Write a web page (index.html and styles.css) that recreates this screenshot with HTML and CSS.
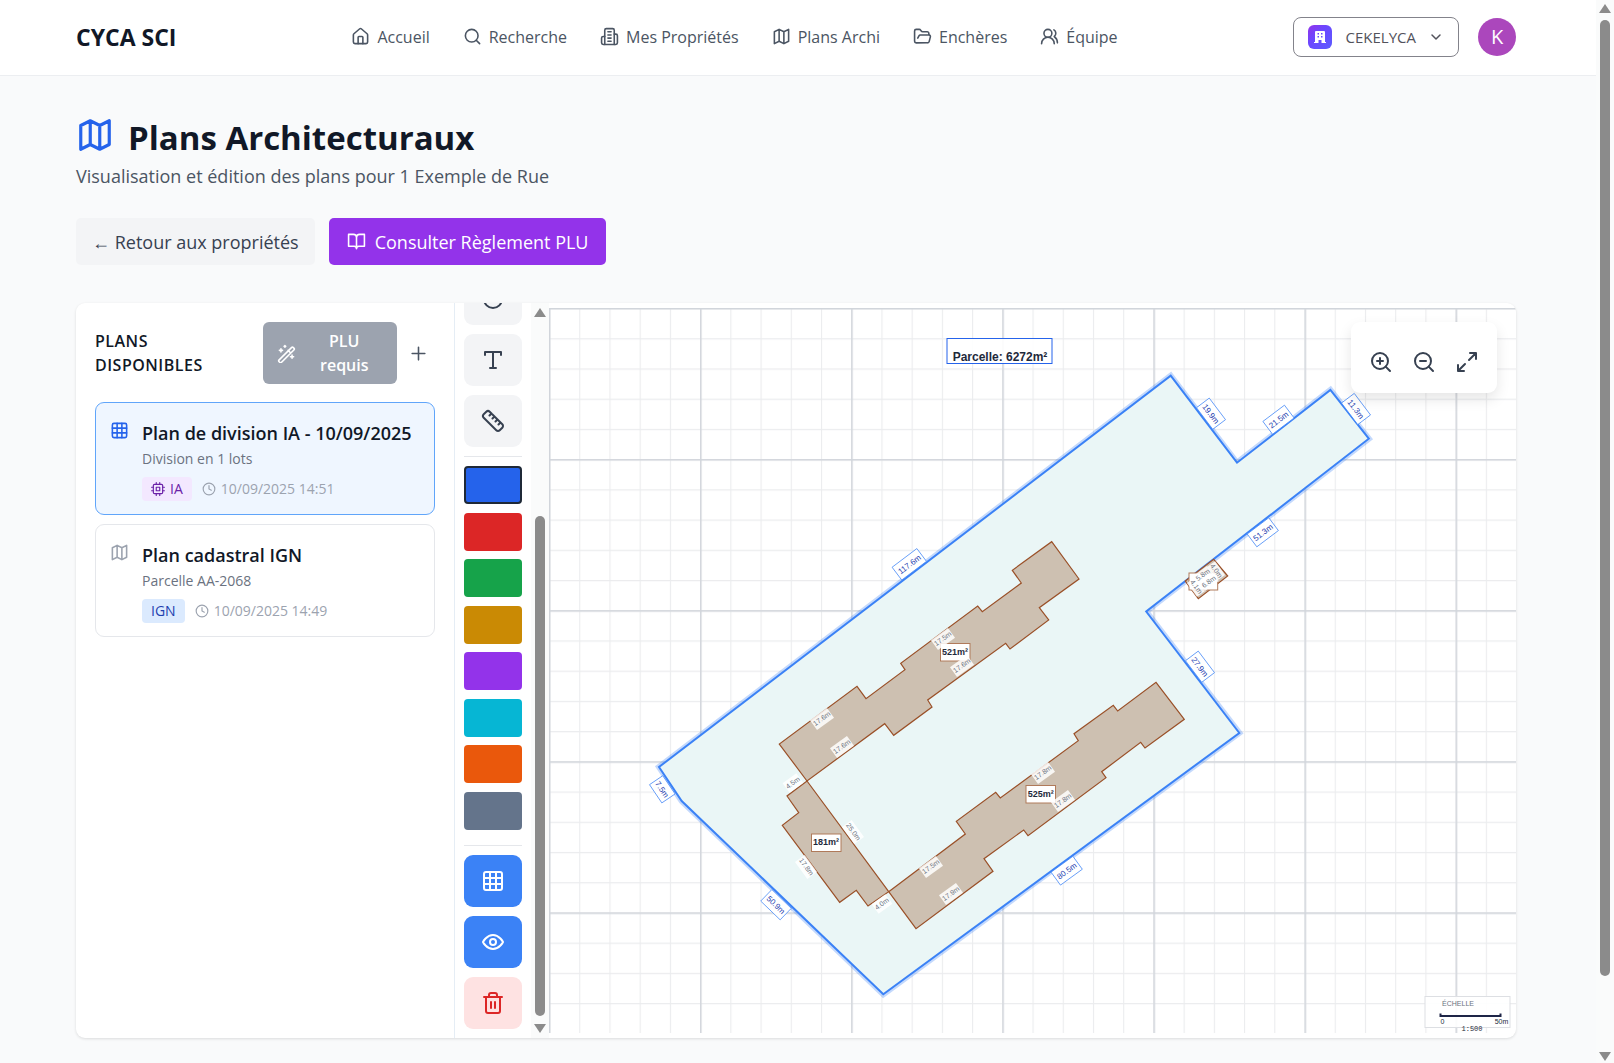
FILE: index.html
```html
<!DOCTYPE html>
<html lang="fr">
<head>
  <meta charset="UTF-8">
  <meta name="viewport" content="width=device-width, initial-scale=1.0">
  <title>CYCA SCI - Plans Architecturaux</title>
  <link rel="stylesheet" href="styles.css">
</head>
<body>
  <div class="page">
    <header class="header">
      <a class="brand" href="#">CYCA SCI</a>
      <nav class="nav">
        <a href="#"><svg class="icon" viewBox="0 0 24 24"><path d="M15 21v-8a1 1 0 0 0-1-1h-4a1 1 0 0 0-1 1v8"/><path d="M3 10a2 2 0 0 1 .7-1.5l7-6a2 2 0 0 1 2.6 0l7 6A2 2 0 0 1 21 10v9a2 2 0 0 1-2 2H5a2 2 0 0 1-2-2z"/></svg>Accueil</a>
        <a href="#"><svg class="icon" viewBox="0 0 24 24"><circle cx="11" cy="11" r="8"/><path d="m21 21-4.3-4.3"/></svg>Recherche</a>
        <a href="#"><svg class="icon" viewBox="0 0 24 24"><path d="M6 22V4a2 2 0 0 1 2-2h8a2 2 0 0 1 2 2v18Z"/><path d="M6 12H4a2 2 0 0 0-2 2v6a2 2 0 0 0 2 2h2"/><path d="M18 9h2a2 2 0 0 1 2 2v9a2 2 0 0 1-2 2h-2"/><path d="M10 6h4M10 10h4M10 14h4M10 18h4"/></svg>Mes Propriétés</a>
        <a href="#"><svg class="icon" viewBox="0 0 24 24"><path d="m3 6 6-3 6 3 6-3v15l-6 3-6-3-6 3zM9 3v15M15 6v15"/></svg>Plans Archi</a>
        <a href="#"><svg class="icon" viewBox="0 0 24 24"><path d="m6 14 1.500-2.900A2 2 0 0 1 9.240 10H20a2 2 0 0 1 1.940 2.500l-1.540 6a2 2 0 0 1-1.950 1.500H4a2 2 0 0 1-2-2V5a2 2 0 0 1 2-2h3.900a2 2 0 0 1 1.690.900l.810 1.200a2 2 0 0 0 1.670.900H18a2 2 0 0 1 2 2v2"/></svg>Enchères</a>
        <a href="#"><svg class="icon" viewBox="0 0 24 24"><path d="M18 21a8 8 0 0 0-16 0"/><circle cx="10" cy="8" r="5"/><path d="M22 20c0-3.370-2-6.500-4-8a5 5 0 0 0-.450-8.300"/></svg>Équipe</a>
      </nav>
      <div class="account">
        <button class="org" type="button">
          <span class="org-logo"><svg viewBox="0 0 16 16"><path fill="#fff" fill-rule="evenodd" d="M4 2h8a1 1 0 0 1 1 1v10h1v1H9.500v-3h-3v3H2v-1h1V3a1 1 0 0 1 1-1zm1.500 2v1.500H7V4zM9 4v1.500h1.500V4zM5.500 7v1.500H7V7zM9 7v1.500h1.500V7z"/></svg></span>
          CEKELYCA
          <svg class="icon chevron" viewBox="0 0 24 24"><path d="m4 8 8 8 8-8"/></svg>
        </button>
        <button class="avatar" type="button" aria-label="Mon compte">K</button>
      </div>
    </header>

    <main class="main">
      <h1><svg class="icon" viewBox="0 0 24 24"><path d="m3 6 6-3 6 3 6-3v15l-6 3-6-3-6 3zM9 3v15M15 6v15"/></svg>Plans Architecturaux</h1>
      <p class="subtitle">Visualisation et édition des plans pour 1 Exemple de Rue</p>
      <div class="actions">
        <a class="btn btn-back" href="#">← Retour aux propriétés</a>
        <button class="btn btn-plu" type="button"><svg class="icon" viewBox="0 0 24 24"><path d="M2 3h6a4 4 0 0 1 4 4v14a3 3 0 0 0-3-3H2zM22 3h-6a4 4 0 0 0-4 4v14a3 3 0 0 1 3-3h7z"/></svg>Consulter Règlement PLU</button>
      </div>

      <section class="workspace">
        <aside class="sidebar">
          <div class="sidebar-head">
            <h2>Plans disponibles</h2>
            <button class="btn-requis" type="button">
              <svg class="icon" viewBox="0 0 24 24"><path d="m21.600 5.600-1.300-1.300a1.200 1.200 0 0 0-1.700 0L2.400 20.400a1.200 1.200 0 0 0 0 1.700l1.300 1.300a1.200 1.200 0 0 0 1.700 0L21.600 7.300a1.200 1.200 0 0 0 0-1.700zM14 8l3 3M5 6v4M19 14v4M10 2v2M7 8H3M21 16h-4M11 3H9"/></svg>
              <span>PLU requis</span>
            </button>
            <button class="btn-add" type="button" aria-label="Ajouter"><svg class="icon" viewBox="0 0 24 24"><path d="M4 12h16M12 4v16"/></svg></button>
          </div>

          <article class="plan selected">
            <svg class="icon plan-icon" viewBox="0 0 24 24"><rect x="3" y="3" width="18" height="18" rx="2"/><path d="M3 9h18M3 15h18M9 3v18M15 3v18"/></svg>
            <div>
              <h3>Plan de division IA - 10/09/2025</h3>
              <p>Division en 1 lots</p>
              <div class="meta">
                <span class="tag tag-ia"><svg class="icon" viewBox="0 0 24 24"><rect x="4" y="4" width="16" height="16" rx="2"/><rect x="9" y="9" width="6" height="6"/><path d="M15 1v3M9 1v3M15 20v3M9 20v3M20 9h3M20 15h3M1 9h3M1 15h3"/></svg>IA</span>
                <span class="date"><svg class="icon" viewBox="0 0 24 24"><circle cx="12" cy="12" r="10"/><path d="M12 6v6l4 2"/></svg>10/09/2025 14:51</span>
              </div>
            </div>
          </article>

          <article class="plan">
            <svg class="icon plan-icon" viewBox="0 0 24 24"><path d="m3 6 6-3 6 3 6-3v15l-6 3-6-3-6 3zM9 3v15M15 6v15"/></svg>
            <div>
              <h3>Plan cadastral IGN</h3>
              <p>Parcelle AA-2068</p>
              <div class="meta">
                <span class="tag tag-ign">IGN</span>
                <span class="date"><svg class="icon" viewBox="0 0 24 24"><circle cx="12" cy="12" r="10"/><path d="M12 6v6l4 2"/></svg>10/09/2025 14:49</span>
              </div>
            </div>
          </article>
        </aside>

        <div class="toolbar">
          <div class="tools">
            <button class="tool" type="button" aria-label="Cercle"><svg class="icon" viewBox="0 0 24 24"><circle cx="12" cy="12" r="9"/></svg></button>
            <button class="tool" type="button" aria-label="Texte"><svg class="icon" viewBox="0 0 24 24"><path d="M4 7V4h16v3M9 20h6M12 4v16"/></svg></button>
            <button class="tool" type="button" aria-label="Mesure"><svg class="icon" viewBox="0 0 24 24"><path d="M21.300 15.300a2.400 2.400 0 0 1 0 3.400l-2.600 2.600a2.400 2.400 0 0 1-3.400 0L2.700 8.700a2.410 2.410 0 0 1 0-3.400l2.600-2.600a2.410 2.410 0 0 1 3.400 0zM14.500 12.500l2-2M11.500 9.500l2-2M8.500 6.500l2-2M17.500 15.500l2-2"/></svg></button>
            <hr>
            <div class="colors">
              <button class="color blue active" type="button" aria-label="Bleu"></button>
              <button class="color red" type="button" aria-label="Rouge"></button>
              <button class="color green" type="button" aria-label="Vert"></button>
              <button class="color yellow" type="button" aria-label="Jaune"></button>
              <button class="color purple" type="button" aria-label="Violet"></button>
              <button class="color cyan" type="button" aria-label="Cyan"></button>
              <button class="color orange" type="button" aria-label="Orange"></button>
              <button class="color gray" type="button" aria-label="Gris"></button>
            </div>
            <hr class="after-colors">
            <button class="tool on" type="button" aria-label="Grille"><svg class="icon" viewBox="0 0 24 24"><rect x="3" y="3" width="18" height="18" rx="2"/><path d="M3 9h18M3 15h18M9 3v18M15 3v18"/></svg></button>
            <button class="tool on" type="button" aria-label="Affichage"><svg class="icon" viewBox="0 0 24 24"><path d="M2 12s3.500-7 10-7 10 7 10 7-3.500 7-10 7-10-7-10-7z"/><circle cx="12" cy="12" r="3"/></svg></button>
            <button class="tool delete" type="button" aria-label="Effacer"><svg class="icon" viewBox="0 0 24 24"><path d="M3 6h18M19 6v14a2 2 0 0 1-2 2H7a2 2 0 0 1-2-2V6M8 6V4a2 2 0 0 1 2-2h4a2 2 0 0 1 2 2v2M10 11v6M14 11v6"/></svg></button>
          </div>
          <div class="scrollbar">
            <span class="arrow-up"></span>
            <span class="thumb thumb-tools"></span>
            <span class="arrow-down"></span>
          </div>
        </div>

        <div class="canvas">
          <svg class="drawing" viewBox="550 308 967 725">
            <defs>
              <pattern id="minor" x="550" y="308" width="30.22" height="30.22" patternUnits="userSpaceOnUse"><path d="M30.220 0H0V30.220" fill="none" stroke="#ebecee" stroke-width="2.200"/></pattern>
              <pattern id="major" x="550" y="308" width="151.1" height="151.1" patternUnits="userSpaceOnUse"><path d="M151.100 0H0V151.100" fill="none" stroke="#d1d5db" stroke-width="3"/></pattern>
            </defs>
            <rect x="550" y="308" width="967" height="725" fill="url(#minor)"/>
            <rect x="550" y="308" width="967" height="725" fill="url(#major)"/>

            <!-- parcelle -->
            <polygon class="halo" points="1171.7,375.7 1238,462.7 1331.4,390 1369.8,438.7 1147.2,611.5 1240.3,733 884.3,994.3 682.7,801 660,767"/>
            <polygon class="parcel" points="1171.7,375.7 1238,462.7 1331.4,390 1369.8,438.7 1147.2,611.5 1240.3,733 884.3,994.3 682.7,801 660,767"/>

            <!-- batiments -->
            <g class="building">
              <polygon points="1052.7,541.7 1080,579 1040.3,607.7 1049.7,620 1011,649 1006.7,643.3 928.7,700 933,707 894.7,735.3 885.7,723.7 808,781 780.3,744 858,686.3 867,698.7 906,669.7 901.7,663.3 978.7,606 983.3,611.7 1022.3,583 1013.3,570.3"/>
              <polygon points="808,781 889.7,891.7 869,906 857.3,890.3 840.7,902.3 783.3,825.3 799.7,812.7 788,796"/>
              <polygon points="889.7,891.7 966.3,834 957.3,821.3 996.7,792.3 1001.3,798 1079.3,740.7 1075,733.7 1114.3,705.3 1118.7,711 1157,682.3 1185.3,719.3 1146,748 1141.7,742.3 1102.7,771.7 1107,777.7 1029,835.7 1024.7,830 985,858.7 994,871.3 917,928.7"/>
              <polygon points="1186.3,581 1214.7,559.3 1228.7,576 1199.3,598.7"/>
            </g>

            <!-- surfaces -->
            <g class="area">
              <rect x="1190" y="573" width="28.700" height="17"/>
              <rect x="941.500" y="643.500" width="29.500" height="17.500"/><text x="956" y="655">521m²</text>
              <rect x="1027" y="785.500" width="29.500" height="17.500"/><text x="1041.700" y="797">525m²</text>
              <rect x="812.500" y="834" width="29.500" height="17.500"/><text x="827" y="845">181m²</text>
            </g>

            <!-- cotes batiments -->
            <g class="dim-small">
              <g transform="translate(944 639) rotate(-36)"><rect x="-10.500" y="-6" width="21" height="12"/><text y="2">17.5m</text></g>
              <g transform="translate(963 666) rotate(-36)"><rect x="-10.500" y="-6" width="21" height="12"/><text y="2">17.6m</text></g>
              <g transform="translate(823 719) rotate(-36)"><rect x="-10.500" y="-6" width="21" height="12"/><text y="2">17.6m</text></g>
              <g transform="translate(843 747) rotate(-36)"><rect x="-10.500" y="-6" width="21" height="12"/><text y="2">17.6m</text></g>
              <g transform="translate(794 783) rotate(-36)"><rect x="-8.500" y="-6" width="17" height="12"/><text y="2">4.5m</text></g>
              <g transform="translate(854 832) rotate(54)"><rect x="-10.500" y="-6" width="21" height="12"/><text y="2">25.0m</text></g>
              <g transform="translate(807 867) rotate(54)"><rect x="-10.500" y="-6" width="21" height="12"/><text y="2">17.8m</text></g>
              <g transform="translate(883 904) rotate(-36)"><rect x="-8.500" y="-6" width="17" height="12"/><text y="2">4.0m</text></g>
              <g transform="translate(932 867) rotate(-36)"><rect x="-10.500" y="-6" width="21" height="12"/><text y="2">17.5m</text></g>
              <g transform="translate(952 894) rotate(-36)"><rect x="-10.500" y="-6" width="21" height="12"/><text y="2">17.9m</text></g>
              <g transform="translate(1044 773) rotate(-36)"><rect x="-10.500" y="-6" width="21" height="12"/><text y="2">17.8m</text></g>
              <g transform="translate(1064 801) rotate(-36)"><rect x="-10.500" y="-6" width="21" height="12"/><text y="2">17.8m</text></g>
              <g transform="translate(1197 587) rotate(54)"><rect x="-8.500" y="-5" width="17" height="10"/><text y="2">4.1m</text></g>
              <g transform="translate(1217 571) rotate(54)"><rect x="-8.500" y="-5" width="17" height="10"/><text y="2">4.0m</text></g>
              <g transform="translate(1204 575) rotate(-36)"><rect x="-8.500" y="-5" width="17" height="10"/><text y="2">5.8m</text></g>
              <g transform="translate(1210 582) rotate(-36)"><rect x="-8.500" y="-5" width="17" height="10"/><text y="2">6.8m</text></g>
            </g>

            <!-- cotes parcelle -->
            <g class="dim">
              <g transform="translate(910.300 564.300) rotate(-37)"><rect x="-15.500" y="-8" width="31" height="16"/><text y="3">117.6m</text></g>
              <g transform="translate(1212 413.700) rotate(53)"><rect x="-13.500" y="-8" width="27" height="16"/><text y="3">19.9m</text></g>
              <g transform="translate(1279.500 419.700) rotate(-37)"><rect x="-13.500" y="-8" width="27" height="16"/><text y="3">21.5m</text></g>
              <g transform="translate(1357 409) rotate(53)"><rect x="-13.500" y="-8" width="27" height="16"/><text y="3">11.3m</text></g>
              <g transform="translate(1263.800 532.300) rotate(-37)"><rect x="-13.500" y="-8" width="27" height="16"/><text y="3">51.3m</text></g>
              <g transform="translate(1201 666.700) rotate(53)"><rect x="-13.500" y="-8" width="27" height="16"/><text y="3">27.9m</text></g>
              <g transform="translate(1067.700 870.700) rotate(-36)"><rect x="-13.500" y="-8" width="27" height="16"/><text y="3">80.5m</text></g>
              <g transform="translate(777 904.700) rotate(44)"><rect x="-13.500" y="-8" width="27" height="16"/><text y="3">50.9m</text></g>
              <g transform="translate(663.300 789.300) rotate(56)"><rect x="-11" y="-8" width="22" height="16"/><text y="3">7.5m</text></g>
            </g>

            <g class="parcel-name">
              <rect x="948" y="338.500" width="105" height="25"/>
              <text x="1001" y="361">Parcelle: 6272m²</text>
            </g>

            <g class="scale">
              <rect x="1426" y="996.500" width="85" height="31"/>
              <text class="scale-title" x="1459" y="1006">ÉCHELLE</text>
              <path d="M1441.500 1016H1501.500M1441.500 1013.500V1017M1501.500 1013.500V1017"/>
              <text x="1443.500" y="1024">0</text>
              <text x="1502.500" y="1024">50m</text>
              <text class="mono" x="1473" y="1031">1:500</text>
            </g>
          </svg>
          <div class="zoom-controls">
            <button type="button" aria-label="Zoom avant"><svg class="icon" viewBox="0 0 24 24"><circle cx="11" cy="11" r="8"/><path d="m21 21-4.350-4.350M11 8v6M8 11h6"/></svg></button>
            <button type="button" aria-label="Zoom arrière"><svg class="icon" viewBox="0 0 24 24"><circle cx="11" cy="11" r="8"/><path d="m21 21-4.350-4.350M8 11h6"/></svg></button>
            <button type="button" aria-label="Plein écran"><svg class="icon" viewBox="0 0 24 24"><path d="M15 3h6v6M9 21H3v-6M21 3l-7 7M3 21l7-7"/></svg></button>
          </div>
        </div>
      </section>
    </main>
  </div>
  <div class="scrollbar page-scrollbar">
    <span class="arrow-up"></span>
    <span class="thumb thumb-page"></span>
    <span class="arrow-down"></span>
  </div>
</body>
</html>
```
FILE: styles.css
```css
* {
  box-sizing: border-box;
}
body {
  margin: 0;
  display: flex;
  min-height: 100vh;
  background: #f9fafb;
  color: #111827;
  font-family: "Segoe UI", "Open Sans", sans-serif;
  font-size: 18px;
  line-height: 24px;
}
h1, h2, h3, p {
  margin: 0;
}
a {
  color: inherit;
  text-decoration: none;
}
button {
  font: inherit;
  color: inherit;
  padding: 0;
  border: 0;
  background: none;
  cursor: pointer;
}
.icon {
  width: 19px;
  height: 19px;
  flex: none;
  fill: none;
  stroke: currentColor;
  stroke-width: 2;
  stroke-linecap: round;
  stroke-linejoin: round;
}
.page {
  flex: 1;
  min-width: 0;
}

/* header */
.header {
  display: flex;
  align-items: center;
  justify-content: space-between;
  height: 76px;
  padding: 0 80px 2px 76px;
  background: white;
  border-bottom: 1px solid #eceef1;
}
.brand {
  font-size: 23px;
  font-weight: 700;
}
.nav {
  display: flex;
  gap: 33px;
  color: #4b5563;
  font-size: 16px;
  font-weight: 500;
}
.nav a {
  display: flex;
  align-items: center;
  gap: 7px;
  white-space: nowrap;
}
.account {
  display: flex;
  align-items: center;
  gap: 19px;
}
.org {
  display: flex;
  align-items: center;
  gap: 14px;
  height: 40px;
  padding: 0 16px 0 14px;
  border: 1px solid #83838b;
  border-radius: 8px;
  color: #52525b;
  font-size: 15px;
}
.org-logo {
  display: flex;
  padding: 4px;
  border-radius: 6px;
  background: linear-gradient(135deg, #9333ea, #6c47ff 40%, #5b5bff);
}
.org-logo svg {
  width: 16px;
  height: 16px;
}
.chevron {
  width: 12px;
  height: 12px;
  stroke-width: 3;
}
.avatar {
  width: 38px;
  height: 38px;
  border-radius: 50%;
  background: #ab47bc;
  color: white;
  font-size: 20px;
}

/* title */
.main {
  padding: 40px 80px 24px 76px;
}
h1 {
  display: flex;
  align-items: center;
  gap: 14px;
  font-size: 33px;
  line-height: 42px;
}
h1 .icon {
  width: 38px;
  height: 38px;
  color: #2563eb;
  margin-bottom: 6px;
}
.subtitle {
  margin-top: 4px;
  color: #4b5563;
}
.actions {
  display: flex;
  gap: 14px;
  margin: 30px 0 38px;
}
.btn {
  display: flex;
  align-items: center;
  gap: 9px;
  height: 47px;
  padding: 0 18px;
  border-radius: 5px;
}
.btn-back {
  padding: 0 16px;
  background: #f3f4f6;
  color: #374151;
}
.btn-plu {
  background: #9333ea;
  color: white;
}

/* workspace */
.workspace {
  display: flex;
  background: white;
  border-radius: 9px;
  box-shadow: 0 1px 3px rgba(0, 0, 0, 0.12);
  overflow: hidden;
}
.sidebar {
  width: 379px;
  flex: none;
  padding: 19px;
  border-right: 1px solid #e5edf5;
}
.sidebar-head {
  display: flex;
  align-items: center;
  margin-bottom: 18px;
}
h2 {
  flex: 1;
  padding-right: 40px;
  font-size: 16px;
  font-weight: 600;
  line-height: 24px;
  letter-spacing: 0.5px;
  text-transform: uppercase;
}
.btn-requis {
  display: flex;
  align-items: center;
  width: 134px;
  height: 62px;
  padding: 0 14px;
  border-radius: 6px;
  background: #9ca3af;
  color: white;
  font-size: 16px;
  font-weight: 600;
}
.btn-requis span {
  flex: 1;
  padding: 0 24px;
}
.btn-add {
  display: flex;
  margin: 0 7px 0 12px;
  color: #4b5563;
}
.plan {
  display: flex;
  gap: 13px;
  height: 113px;
  margin-bottom: 9px;
  padding: 18px 14px;
  border: 1px solid #e5e7eb;
  border-radius: 9px;
}
.plan.selected {
  border-color: #60a5fa;
  background: #eff6ff;
}
.plan-icon {
  color: #9ca3af;
}
.selected .plan-icon {
  color: #2563eb;
}
h3 {
  font-size: 18px;
  font-weight: 600;
  line-height: 24px;
  white-space: nowrap;
}
.plan p {
  color: #6b7280;
  font-size: 14px;
  line-height: 28px;
}
.meta {
  display: flex;
  align-items: center;
  gap: 10px;
  margin-top: 4px;
  font-size: 14px;
}
.meta .icon {
  width: 14px;
  height: 14px;
}
.tag {
  display: flex;
  align-items: center;
  gap: 5px;
  height: 24px;
  padding: 0 9px;
  border-radius: 4px;
  font-weight: 500;
}
.tag-ia {
  background: #f3e8ff;
  color: #6b21a8;
}
.tag-ign {
  background: #dbeafe;
  color: #1e40af;
}
.date {
  display: flex;
  align-items: center;
  gap: 5px;
  color: #9ca3af;
}

/* toolbar, scrolled to its end */
.toolbar {
  display: flex;
  flex: none;
  width: 94px;
  contain: size;
  overflow: hidden;
}
.tools {
  flex: 1;
  display: flex;
  flex-direction: column;
  justify-content: flex-end;
  gap: 9px;
  padding: 9px;
}
.tool {
  display: flex;
  flex: none;
  align-items: center;
  justify-content: center;
  height: 52px;
  border-radius: 9px;
  background: #f3f4f6;
  color: #374151;
}
.tool .icon {
  width: 24px;
  height: 24px;
}
.tool.on {
  background: #3b82f6;
  color: white;
}
.tool.delete {
  background: #fee2e2;
  color: #dc2626;
}
.toolbar hr {
  width: 100%;
  margin: 0;
  border: 0;
  border-top: 1px solid #e5e7eb;
}
.toolbar .after-colors {
  margin-top: 6px;
}
.colors {
  display: flex;
  flex: none;
  flex-direction: column;
  justify-content: space-between;
  height: 364px;
}
.color {
  height: 38px;
  border-radius: 4px;
}
.color.active {
  border: 2px solid #1f2937;
}
.blue { background: #2563eb; }
.red { background: #dc2626; }
.green { background: #16a34a; }
.yellow { background: #ca8a04; }
.purple { background: #9333ea; }
.cyan { background: #06b6d4; }
.orange { background: #ea580c; }
.gray { background: #64748b; }

/* scrollbars */
.scrollbar {
  display: flex;
  flex-direction: column;
  align-items: center;
  flex: none;
  width: 18px;
  padding: 5px 0;
  background: #fafbfb;
}
.arrow-up, .arrow-down {
  border: 6px solid transparent;
}
.arrow-up {
  border-top: 0;
  border-bottom: 9px solid #8b8b8b;
}
.arrow-down {
  border-bottom: 0;
  border-top: 9px solid #8b8b8b;
}
.thumb {
  width: 10px;
  border-radius: 5px;
  background: #8b8b8b;
}
.thumb-tools {
  height: 69%;
  margin: auto 0 8px;
}
.thumb-page {
  flex: 1;
  margin: 7px 0 76px;
}
.page-scrollbar {
  position: sticky;
  top: 0;
  height: 100vh;
  padding: 4px 0 2px;
}

/* canvas */
.canvas {
  position: relative;
  flex: 1;
  min-width: 0;
  padding: 5px 0;
}
.drawing {
  display: block;
  width: 100%;
  height: auto;
  font-family: "Liberation Sans", Arial, sans-serif;
}
.drawing text {
  text-anchor: middle;
}
.halo {
  fill: none;
  stroke: #3b82f6;
  stroke-opacity: 0.3;
  stroke-width: 6;
}
.parcel {
  fill: #eaf6f6;
  stroke: #3b82f6;
  stroke-width: 2;
}
.building {
  fill: #cdc0b1;
  stroke: #9a5028;
  stroke-width: 1.2;
}
.area rect {
  fill: white;
  stroke: #b07a5a;
}
.area text {
  fill: #1e293b;
  font-size: 9px;
  font-weight: 700;
}
.dim rect {
  fill: white;
  stroke: #3b82f6;
  stroke-width: 0.7;
}
.dim text {
  fill: #1e40af;
  font-size: 8px;
}
.dim-small rect {
  fill: white;
  fill-opacity: 0.85;
}
.dim-small text {
  fill: #6b7280;
  font-size: 7px;
}
.parcel-name rect {
  fill: white;
  fill-opacity: 0.9;
  stroke: #2563eb;
}
.parcel-name text {
  fill: #1e293b;
  font-size: 12px;
  font-weight: 700;
}
.scale rect {
  fill: white;
  fill-opacity: 0.9;
  stroke: #dddfe3;
}
.scale path {
  fill: none;
  stroke: #1e2547;
  stroke-width: 2;
}
.scale text {
  fill: #1e293b;
  font-size: 7px;
}
.scale .scale-title {
  fill: #6b7280;
}
.scale .mono {
  font-family: "Liberation Mono", monospace;
}
.zoom-controls {
  position: absolute;
  top: 19px;
  right: 19px;
  display: flex;
  gap: 19px;
  padding: 28px 18px 19px;
  border-radius: 9px;
  background: white;
  box-shadow: 0 6px 14px rgba(0, 0, 0, 0.1);
  color: #374151;
}
.zoom-controls button {
  display: flex;
}
.zoom-controls .icon {
  width: 24px;
  height: 24px;
}
```
